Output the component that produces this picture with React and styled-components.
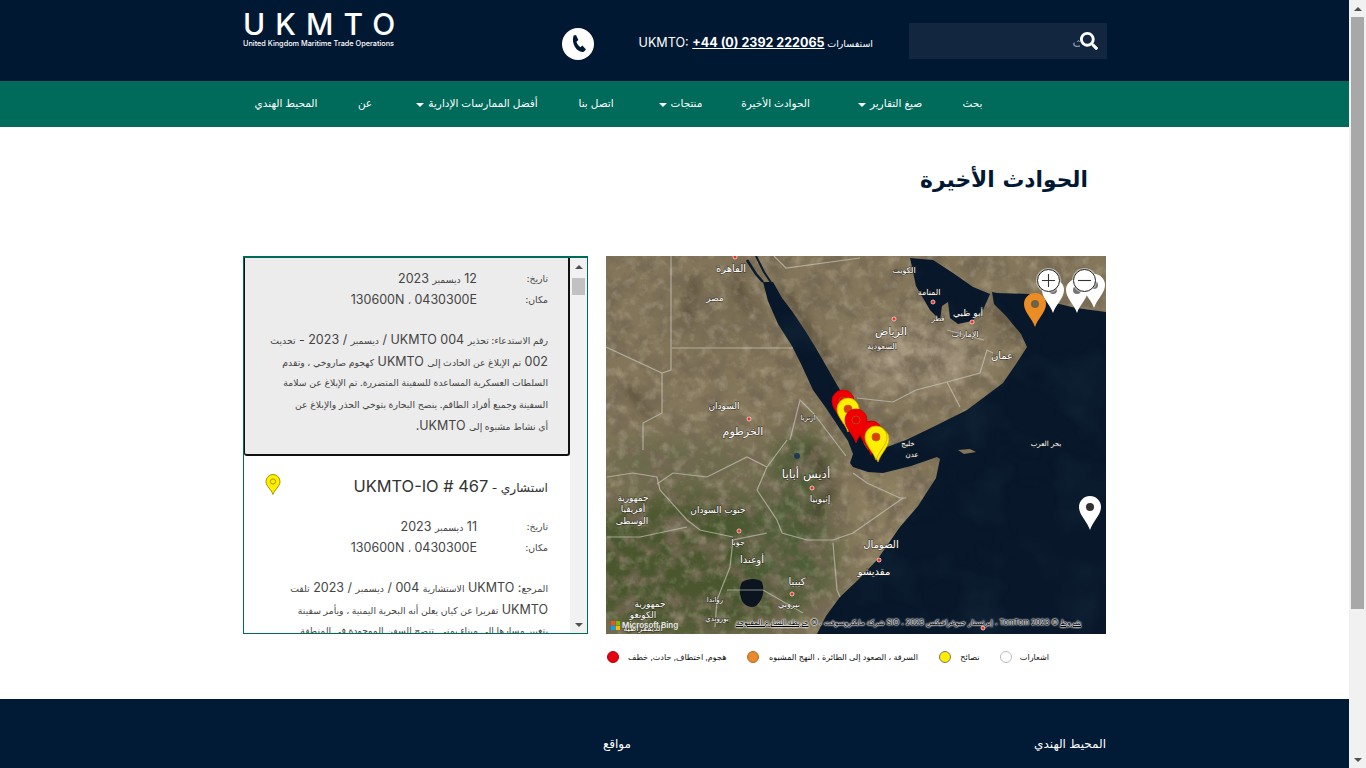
import React, { useLayoutEffect, useRef } from "react"
import styled, { createGlobalStyle } from "styled-components"
import { FaSearch } from "react-icons/fa"

const NAVY = "#011833"
const GREEN = "#006b5a"
const FONT = `Inter, "DejaVu Sans", sans-serif`

const GlobalStyle = createGlobalStyle`
  body {
    margin: 0;
    background: #fff;
    font-family: ${FONT};
    color: #333;
  }
  * { box-sizing: border-box; }
`

const Page = styled.div`
  direction: rtl;
`

const Wrap = styled.div`
  width: 863px;
  margin-right: 260px;
`

const Header = styled.header`
  height: 81px;
  background: ${NAVY};
`

const HeaderRow = styled(Wrap)`
  display: flex;
  align-items: flex-start;
  width: 864px;
  margin-right: 259px;
  height: 100%;
`

const SearchBox = styled.div`
  position: relative;
  width: 198px;
  height: 36px;
  margin-top: 23px;
  margin-left: 36px;
  background: #12263f;
`

const SearchInput = styled.input`
  width: 100%;
  height: 100%;
  border: 0;
  outline: 0;
  background: transparent;
  padding: 0 8px 0 0;
  color: #fff;
  font-family: ${FONT};
  font-size: 14px;
  &::placeholder { color: #8b96a3; }
`

const SearchIcon = styled(FaSearch)`
  position: absolute;
  right: 9px;
  top: 9px;
  width: 18px;
  height: 18px;
  color: #fff;
  background: #12263f;
`

const Contact = styled.div`
  width: 233px;
  margin-top: 34px;
  margin-left: 46px;
  color: #fff;
  font-size: 9.5px;
  line-height: 18px;
  white-space: nowrap;
`

const ContactLatin = styled.span`
  font-size: 12.6px;
  font-weight: 400;
`

const ContactNumber = styled.a`
  font-size: 12.5px;
  font-weight: 700;
  color: #fff;
  text-decoration: underline;
`

const PhoneBadge = styled.div`
  display: flex;
  align-items: center;
  justify-content: center;
  width: 32px;
  height: 32px;
  margin-top: 28px;
  border-radius: 50%;
  background: #fff;
`

const Logo = styled.div`
  direction: ltr;
  margin-right: auto;
  margin-top: 9px;
  width: 153px;
  color: #fff;
`

const LogoMark = styled.div`
  font-size: 30px;
  line-height: 30px;
  font-weight: 500;
  letter-spacing: 10.1px;
  white-space: nowrap;
`

const LogoName = styled.div`
  font-size: 7.3px;
  line-height: 9px;
  font-weight: 500;
  white-space: nowrap;
`

const Nav = styled.nav`
  height: 46px;
  background: ${GREEN};
`

const NavRow = styled(Wrap)`
  display: grid;
  grid-template-columns: 55px 110px 119px 71px 98px 140px 84px 74px;
  padding-right: 106px;
  height: 100%;
`

const NavItem = styled.a`
  display: flex;
  align-items: center;
  justify-content: center;
  gap: 4px;
  color: #fff;
  font-size: 10.5px;
  white-space: nowrap;
  padding-bottom: 2px;
`

const Caret = styled.i`
  width: 0;
  height: 0;
  margin-top: 3px;
  border-top: 4px solid #fff;
  border-left: 4px solid transparent;
  border-right: 4px solid transparent;
`

const Main = styled(Wrap)`
  height: 572px;
`

const Title = styled.h1`
  margin: 0;
  padding: 34px 18px 0 0;
  height: 129px;
  font-family: "DejaVu Sans", sans-serif;
  font-size: 21.8px;
  line-height: 38px;
  font-weight: 700;
  color: ${NAVY};
`

const Columns = styled.div`
  display: flex;
  gap: 18px;
`

const MapColumn = styled.div`
  width: 500px;
`

const MapFrame = styled.div`
  position: relative;
  width: 500px;
  height: 378px;
  overflow: hidden;
  background: #0a1a2e;
`

const MapSvg = styled.svg`
  display: block;
`

const ZoomButton = styled.button`
  position: absolute;
  top: 13px;
  left: ${props => props.$left}px;
  width: 23px;
  height: 23px;
  padding: 0;
  border: 1.5px solid #222;
  border-radius: 50%;
  background: #fff;
  box-shadow: 0 0 0 1px rgba(255, 255, 255, 0.5);
  display: flex;
  align-items: center;
  justify-content: center;
`

const BingMark = styled.div`
  position: absolute;
  left: 5px;
  bottom: 4px;
  display: flex;
  align-items: center;
  gap: 2px;
  direction: ltr;
  color: #e8e8e8;
  font-size: 8px;
  font-weight: 600;
`

const Attribution = styled.div`
  position: absolute;
  left: 126px;
  bottom: 6px;
  width: 349px;
  white-space: nowrap;
  font-size: 7.4px;
  line-height: 10px;
  color: #000;
  text-shadow: 0 0 2px #fff, 0 0 2px #fff, 0 0 2px #fff, 0 0 1px #fff;
`

const AttrLink = styled.span`
  text-decoration: underline;
`

const Legend = styled.div`
  display: grid;
  grid-template-columns: 49px 41px 171px 120px;
  column-gap: 20.5px;
  padding-right: 57px;
  margin-top: 17px;
`

const LegendItem = styled.div`
  display: flex;
  align-items: center;
  justify-content: space-between;
  height: 12px;
  font-size: 8.1px;
  color: #111;
  white-space: nowrap;
`

const LegendDot = styled.span`
  width: 12px;
  height: 12px;
  border-radius: 50%;
  background: ${props => props.$color};
  border: 1px solid ${props => props.$line};
`

const ListBox = styled.div`
  position: relative;
  width: 345px;
  height: 378px;
  border: 1px solid ${GREEN};
  border-top-width: 2px;
  background: #fff;
`

const ListScroller = styled.div`
  width: 326px;
  margin-right: 17px;
  height: 100%;
  overflow: hidden;
`

const ScrollTrack = styled.div`
  position: ${props => (props.$page ? "fixed" : "absolute")};
  top: 0;
  right: 0;
  bottom: 0;
  width: 17px;
  display: flex;
  flex-direction: column;
  align-items: center;
  background: #f1f1f1;
`

const ScrollArrow = styled.div`
  flex: none;
  height: 17px;
  display: flex;
  align-items: center;
  justify-content: center;
  &::before {
    content: "";
    border-left: 4px solid transparent;
    border-right: 4px solid transparent;
    border-${props => (props.$down ? "top" : "bottom")}: 4px solid #505050;
  }
`

const ScrollRail = styled.div`
  flex: 1;
  width: 13px;
`

const ScrollThumb = styled.div`
  margin-top: ${props => props.$top}px;
  height: ${props => props.$height}px;
  background: ${props => props.$color};
`

const Card = styled.article`
  padding: 0 ${props => (props.$selected ? 20 : 22)}px 0 19px;
  margin-top: ${props => (props.$selected ? 0 : 2)}px;
  height: ${props => props.$height}px;
  background: ${props => (props.$selected ? "#ececec" : "#fff")};
  border: ${props => (props.$selected ? "solid #111" : "0")};
  border-width: ${props => (props.$selected ? "0 2px 2px 1px" : "0")};
  border-radius: 0 0 3px 3px;
  font-size: 9.3px;
  color: #444;
`

const CardHead = styled.div`
  display: flex;
  align-items: center;
  justify-content: space-between;
  height: 58px;
`

const CardTitle = styled.h3`
  margin: 0;
  font-size: 12.2px;
  line-height: 22px;
  font-weight: 400;
  color: #333;
`

const CardTitleLatin = styled.span`
  font-size: 16.4px;
`

const Pin = styled.svg`
  margin-bottom: 6px;
  margin-left: 2px;
`

const InfoRow = styled.div`
  display: grid;
  grid-template-columns: 71px 1fr;
  height: 21px;
  line-height: 21px;
`

const Spacer = styled.div`
  height: 19px;
`

const Line = styled.div`
  height: 21.6px;
  line-height: 21.6px;
  white-space: nowrap;
`

const Latin = styled.span`
  font-size: 12.5px;
`

const Footer = styled.footer`
  height: 253px;
  background: #011a36;
  color: #fff;
`

const FooterRow = styled(Wrap)`
  display: grid;
  grid-template-columns: 475px 1fr;
  padding-top: 36px;
`

const FooterHead = styled.div`
  font-size: 12px;
  line-height: 18px;
`

// splits a text into runs so latin digits and names can sit at their own size
const mixed = text =>
  text.split(/([\x20-\x7e]*[A-Za-z0-9][\x20-\x7e]*)/).map((part, i) =>
    i % 2 ? <Latin key={i}>{part}</Latin> : part
  )

const navLinks = [
  { label: "بحث" },
  { label: "صيغ التقارير", caret: true },
  { label: "الحوادث الأخيرة" },
  { label: "منتجات", caret: true },
  { label: "اتصل بنا" },
  { label: "أفضل الممارسات الإدارية", caret: true },
  { label: "عن" },
  { label: "المحيط الهندي" },
]

const incidents = [
  {
    id: 1,
    selected: true,
    height: 246,
    title: "تحذير - UKMTO-IO # 468",
    date: "12 ديسمبر 2023",
    place: "130600N ، 0430300E",
    lines: [
      "رقم الاستدعاء: تحذير UKMTO 004 / ديسمبر / 2023 - تحديث",
      "002 تم الإبلاغ عن الحادث إلى UKMTO كهجوم صاروخي ، وتقدم",
      "السلطات العسكرية المساعدة للسفينة المتضررة. تم الإبلاغ عن سلامة",
      "السفينة وجميع أفراد الطاقم. ينصح البحارة بتوخي الحذر والإبلاغ عن",
      "أي نشاط مشبوه إلى UKMTO.",
    ],
  },
  {
    id: 2,
    height: 260,
    title: "استشاري - UKMTO-IO # 467",
    date: "11 ديسمبر 2023",
    place: "130600N ، 0430300E",
    lines: [
      "المرجع: UKMTO الاستشارية 004 / ديسمبر / 2023 تلقت",
      "UKMTO تقريرا عن كيان يعلن أنه البحرية اليمنية ، ويأمر سفينة",
      "بتغيير مسارها إلى ميناء يمني. تنصح السفن الموجودة في المنطقة",
    ],
  },
]

const legend = [
  { label: "اشعارات", color: "#fff", line: "#bbb" },
  { label: "نصائح", color: "#ffee00", line: "#777" },
  { label: "السرقة ، الصعود إلى الطائرة ، النهج المشبوه", color: "#e8892b", line: "#b86a20" },
  { label: "هجوم, اختطاف, حادث, خطف", color: "#e60012", line: "#b00" },
]

const labels = [
  ["القاهرة", 125, 16, 10],
  ["مصر", 109, 45, 9],
  ["الكويت", 298, 17, 8],
  ["المنامة", 323, 39, 8],
  ["قطر", 332, 65, 7],
  ["أبو ظبي", 362, 60, 9],
  ["الإمارات", 359, 81, 8],
  ["الرياض", 285, 79, 11],
  ["السعودية", 276, 93, 8],
  ["عمان", 396, 103, 10],
  ["السودان", 118, 153, 9],
  ["الخرطوم", 137, 179, 11],
  ["ارتريا", 202, 164, 7],
  ["خليج", 302, 190, 7],
  ["عدن", 306, 201, 7],
  ["بحر العرب", 440, 190, 7],
  ["أديس أبابا", 200, 222, 12],
  ["إثيوبيا", 214, 246, 9],
  ["جمهورية", 27, 245, 9],
  ["أفريقيا", 27, 256, 9],
  ["الوسطى", 26, 268, 9],
  ["جنوب السودان", 112, 257, 9],
  ["جوبا", 132, 289, 8],
  ["أوغندا", 146, 307, 10],
  ["الصومال", 275, 292, 10],
  ["مقديشو", 268, 319, 10],
  ["كينيا", 191, 329, 10],
  ["نيروبي", 183, 351, 8],
  ["رواندا", 109, 346, 7],
  ["بوروندي", 111, 365, 7],
  ["جمهورية", 44, 351, 9],
  ["الكونغو", 37, 362, 9],
  ["الديمقراطية", 37, 375, 8],
]

const cities = [
  [129, 1], [288, 63], [327, 46], [366, 66], [143, 163], [206, 232],
  [133, 275], [273, 304], [186, 338], [377, 372],
]

const borders = [
  "M65 0V114L56 117L0 91",
  "M66 92H187",
  "M56 117V157L37 167V194",
  "M251 142L287 146L310 134L341 126L374 117L381 94L387 97",
  "M341 126L354 151",
  "M168 0L180 12L254 2",
  "M341 74L378 84",
  "M184 184L194 144L208 158L240 200",
  "M181 184L161 211L151 234L171 264L176 277L201 284L227 284L247 277L297 242",
  "M161 277L127 284L124 311L111 344L109 371",
  "M1 221L27 217L51 221L54 234L81 264L94 274L127 281",
  "M1 281L34 281L81 271",
  "M227 287L231 334L234 341",
  "M121 334L157 334L197 357",
  "M51 228L67 217L101 221L141 201L161 211",
  "M247 217L261 227L294 242L300 242",
]

// dark mountain ranges and river valleys that show through the satellite image
const ranges = [
  "M176 30L210 85L245 140L262 180",
  "M262 180L300 165",
  "M385 50L415 85",
  "M90 20L80 70",
  "M205 190L225 235L200 270",
  "M130 20L134 40L146 55",
  "M20 130L45 160",
]

const pins = [
  { x: 447, y: 57, color: "#fff", hole: "#666" },
  { x: 471, y: 57, color: "#fff", hole: "#666" },
  { x: 488, y: 52, color: "#fff", hole: "#666" },
  { x: 429, y: 71, color: "#ec8c25", hole: "#5f5f4a" },
  { x: 484, y: 274, color: "#fff", hole: "#1b1b1b" },
  { x: 237, y: 168, color: "#f00000", hole: "#e80000", line: "#c00" },
  { x: 242, y: 176, color: "#ffee00", hole: "#dc2a10", line: "#c9a400" },
  { x: 265, y: 199, color: "#f00000", hole: "#e80000", line: "#b00" },
  { x: 250, y: 187, color: "#f00000", hole: "#e80000", line: "#c00" },
  { x: 272, y: 206, color: "#ffee00", hole: "#dc2a10", line: "#c9a400" },
  { x: 270, y: 204, color: "#ffee00", hole: "#dc2a10", line: "#c9a400" },
]

const MapPin = ({ x, y, color, hole, line }) => (
  <g transform={`translate(${x} ${y})`}>
    <path
      d="M0 0C-3-9-11-15-11-23A11 11 0 1 1 11-23C11-15 3-9 0 0Z"
      fill={color}
      stroke={line || "none"}
      strokeWidth="0.8"
    />
    <circle cx="0" cy="-23" r="4" fill={hole} stroke={line ? "#a85a10" : "none"} strokeWidth="0.8" opacity="0.9" />
  </g>
)

const SatelliteMap = () => (
  <MapSvg width="500" height="378" viewBox="0 0 500 378">
    <defs>
      <filter id="darkGrain" x="0" y="0" width="100%" height="100%">
        <feTurbulence type="fractalNoise" baseFrequency="0.05" numOctaves="6" seed="7" />
        <feColorMatrix values="0 0 0 0 0.18  0 0 0 0 0.14  0 0 0 0 0.09  3.4 0 0 0 -1.4" />
      </filter>
      <filter id="lightGrain" x="0" y="0" width="100%" height="100%">
        <feTurbulence type="fractalNoise" baseFrequency="0.09" numOctaves="4" seed="21" />
        <feColorMatrix values="0 0 0 0 0.72  0 0 0 0 0.64  0 0 0 0 0.5  0 2.4 0 0 -1.15" />
      </filter>
      <filter id="seaGrain" x="0" y="0" width="100%" height="100%">
        <feTurbulence type="fractalNoise" baseFrequency="0.02" numOctaves="3" seed="4" />
        <feColorMatrix values="0 0 0 0 0.1  0 0 0 0 0.2  0 0 0 0 0.32  0 0 2 0 -0.9" />
      </filter>
      <filter id="soft">
        <feGaussianBlur stdDeviation="14" />
      </filter>
      <filter id="softer">
        <feGaussianBlur stdDeviation="4" />
      </filter>
      <clipPath id="seaClip">
        <path d="M157 26L162 45L172 68L186 90L195 108L207 134L220 152L232 170L242 185L247 198L244 207L247 211L262 216L277 217L305 210L331 201L334 203L330 222L312 250L294 271L271 304L252 324L234 341L220 360L211 378H500V56L470 52L445 46L424 38L391 37L386 36L388 48L400 60L415 78L421 91L410 108L397 127L361 154L327 171L300 184L281 191L262 194L258 188L252 170L245 155L234 134L211 94L200 76L186 55L176 42L167 26ZM304 2L310 30L324 54L334 64L336 50L342 46L344 62L352 68L366 65L377 54L384 38L367 31L347 17L327 4Z" />
      </clipPath>
    </defs>

    <rect width="500" height="378" fill="#83765a" />
    <g filter="url(#soft)">
      <ellipse cx="90" cy="310" rx="140" ry="75" fill="#48572f" />
      <ellipse cx="185" cy="285" rx="45" ry="70" fill="#505d38" />
      <ellipse cx="195" cy="205" rx="30" ry="30" fill="#4b5a35" />
      <ellipse cx="275" cy="260" rx="30" ry="50" fill="#8d8060" />
      <ellipse cx="310" cy="100" rx="70" ry="30" fill="#a0927a" />
      <ellipse cx="70" cy="205" rx="80" ry="20" fill="#66684a" />
      <ellipse cx="110" cy="60" rx="60" ry="40" fill="#7c6f55" />
    </g>
    <g filter="url(#softer)" fill="none" stroke="#3f3527" strokeWidth="11" opacity="0.5">
      {ranges.map(d => (
        <path key={d} d={d} />
      ))}
    </g>
    <rect width="500" height="378" filter="url(#darkGrain)" opacity="0.85" />
    <rect width="500" height="378" filter="url(#lightGrain)" opacity="0.3" />

    <rect width="500" height="378" fill="#081729" clipPath="url(#seaClip)" />
    <g clipPath="url(#seaClip)">
      <rect width="500" height="378" filter="url(#seaGrain)" opacity="0.12" />
    </g>
    <path d="M141 4L150 18L157 26" fill="none" stroke="#0b1c30" strokeWidth="2.5" />
    <path d="M150 0L158 16L166 28" fill="none" stroke="#0b1c30" strokeWidth="2" />
    <path d="M136 326C142 322 152 322 156 326C159 334 157 344 150 350C144 353 137 349 135 342C133 336 134 330 136 326Z" fill="#0c1420" />
    <circle cx="191" cy="200" r="3" fill="#1f3a55" />
    <path d="M352 194L364 193L370 196L358 198Z" fill="#83765a" />

    <g fill="none" stroke="#cfcfc4" strokeWidth="1.2" opacity="0.62">
      {borders.map(d => (
        <path key={d} d={d} />
      ))}
    </g>

    {cities.map(([x, y]) => (
      <circle key={`${x}-${y}`} cx={x} cy={y} r="2" fill="#e2342b" stroke="#ffd9d0" strokeWidth="0.8" />
    ))}

    <g
      fill="#fff"
      stroke="#27231a"
      strokeWidth="1.4"
      strokeOpacity="0.55"
      paintOrder="stroke"
      textAnchor="middle"
      fontFamily="DejaVu Sans, sans-serif"
    >
      {labels.map(([text, x, y, size]) => (
        <text key={`${text}-${x}`} x={x} y={y} fontSize={size}>
          {text}
        </text>
      ))}
    </g>

    {pins.map(pin => (
      <MapPin key={`${pin.x}-${pin.y}`} {...pin} />
    ))}
  </MapSvg>
)

const ScrollBar = ({ page, top, height, color }) => (
  <ScrollTrack $page={page}>
    <ScrollArrow />
    <ScrollRail>
      <ScrollThumb $top={top} $height={height} $color={color} />
    </ScrollRail>
    <ScrollArrow $down />
  </ScrollTrack>
)

const ListCard = ({ item }) => (
  <Card $selected={item.selected} $height={item.height}>
    <CardHead>
      <CardTitle>
        {item.title.split(/(UKMTO-IO # \d+)/).map((part, i) =>
          i % 2 ? <CardTitleLatin key={i}>{part}</CardTitleLatin> : part
        )}
      </CardTitle>
      <Pin width="16" height="21" viewBox="0 0 16 21">
        <path
          d="M8 20.5C6.5 15.5 1 12.5 1 7.5A7 7 0 0 1 15 7.5C15 12.5 9.5 15.5 8 20.5Z"
          fill="#ffee00"
          stroke="#a69400"
        />
        <circle cx="8" cy="7.5" r="2.6" fill="none" stroke="#a69400" />
      </Pin>
    </CardHead>
    <InfoRow>
      <span>تاريخ:</span>
      <span>{mixed(item.date)}</span>
    </InfoRow>
    <InfoRow>
      <span>مكان:</span>
      <span>{mixed(item.place)}</span>
    </InfoRow>
    <Spacer />
    {item.lines.map(line => (
      <Line key={line}>{mixed(line)}</Line>
    ))}
  </Card>
)

const App = () => {
  const listRef = useRef(null)

  useLayoutEffect(() => {
    listRef.current.scrollTop = 48
  }, [])

  return (
    <Page>
      <GlobalStyle />
      <ScrollBar page top={0} height={592} color="#a8a8a8" />
      <Header>
        <HeaderRow>
          <SearchBox>
            <SearchInput placeholder="بحث" />
            <SearchIcon />
          </SearchBox>
          <Contact>
            استفسارات <ContactLatin>UKMTO: </ContactLatin>
            <ContactNumber>+44 (0) 2392 222065</ContactNumber>
          </Contact>
          <PhoneBadge>
            <svg width="18" height="20" viewBox="0 0 18 20">
              <path
                fill={NAVY}
                d="M4.6 1.6L7 1L9.4 6L7.4 7.8C8 10 9.4 12 11.4 13.2L13.4 11.6L17 15.6L14.8 17.8C9 19.4 1.6 10.6 4.6 1.6Z"
              />
            </svg>
          </PhoneBadge>
          <Logo>
            <LogoMark>UKMTO</LogoMark>
            <LogoName>United Kingdom Maritime Trade Operations</LogoName>
          </Logo>
        </HeaderRow>
      </Header>

      <Nav>
        <NavRow>
          {navLinks.map(link => (
            <NavItem key={link.label}>
              {link.label}
              {link.caret && <Caret />}
            </NavItem>
          ))}
        </NavRow>
      </Nav>

      <Main>
        <Title>الحوادث الأخيرة</Title>
        <Columns>
          <MapColumn>
            <MapFrame>
              <SatelliteMap />
              <ZoomButton $left={431} aria-label="zoom in">
                <svg width="15" height="15" viewBox="0 0 15 15">
                  <path d="M1 7.5H14M7.5 1V14" stroke="#333" strokeWidth="1.1" />
                </svg>
              </ZoomButton>
              <ZoomButton $left={467} aria-label="zoom out">
                <svg width="15" height="15" viewBox="0 0 15 15">
                  <path d="M1 7.5H14" stroke="#333" strokeWidth="1.1" />
                </svg>
              </ZoomButton>
              <BingMark>
                <svg width="9" height="9" viewBox="0 0 9 9">
                  <rect width="4.2" height="4.2" fill="#f25022" />
                  <rect x="4.8" width="4.2" height="4.2" fill="#7fba00" />
                  <rect y="4.8" width="4.2" height="4.2" fill="#00a4ef" />
                  <rect x="4.8" y="4.8" width="4.2" height="4.2" fill="#ffb900" />
                </svg>
                Microsoft Bing
              </BingMark>
              <Attribution>
                <AttrLink>شروط</AttrLink> © TomTom 2023 ، إيرثستار جيوغرافيكس 2023 ، SIO شركة مايكروسوفت ، © <AttrLink>خريطة الشارع المفتوحة</AttrLink>
              </Attribution>
            </MapFrame>
            <Legend>
              {legend.map(item => (
                <LegendItem key={item.label}>
                  {item.label}
                  <LegendDot $color={item.color} $line={item.line} />
                </LegendItem>
              ))}
            </Legend>
          </MapColumn>
          <ListBox>
            <ListScroller ref={listRef}>
              {incidents.map(item => (
                <ListCard key={item.id} item={item} />
              ))}
            </ListScroller>
            <ScrollBar top={3} height={17} color="#c1c1c1" />
          </ListBox>
        </Columns>
      </Main>

      <Footer>
        <FooterRow>
          <FooterHead>المحيط الهندي</FooterHead>
          <FooterHead>مواقع</FooterHead>
        </FooterRow>
      </Footer>
    </Page>
  )
}

export default App
